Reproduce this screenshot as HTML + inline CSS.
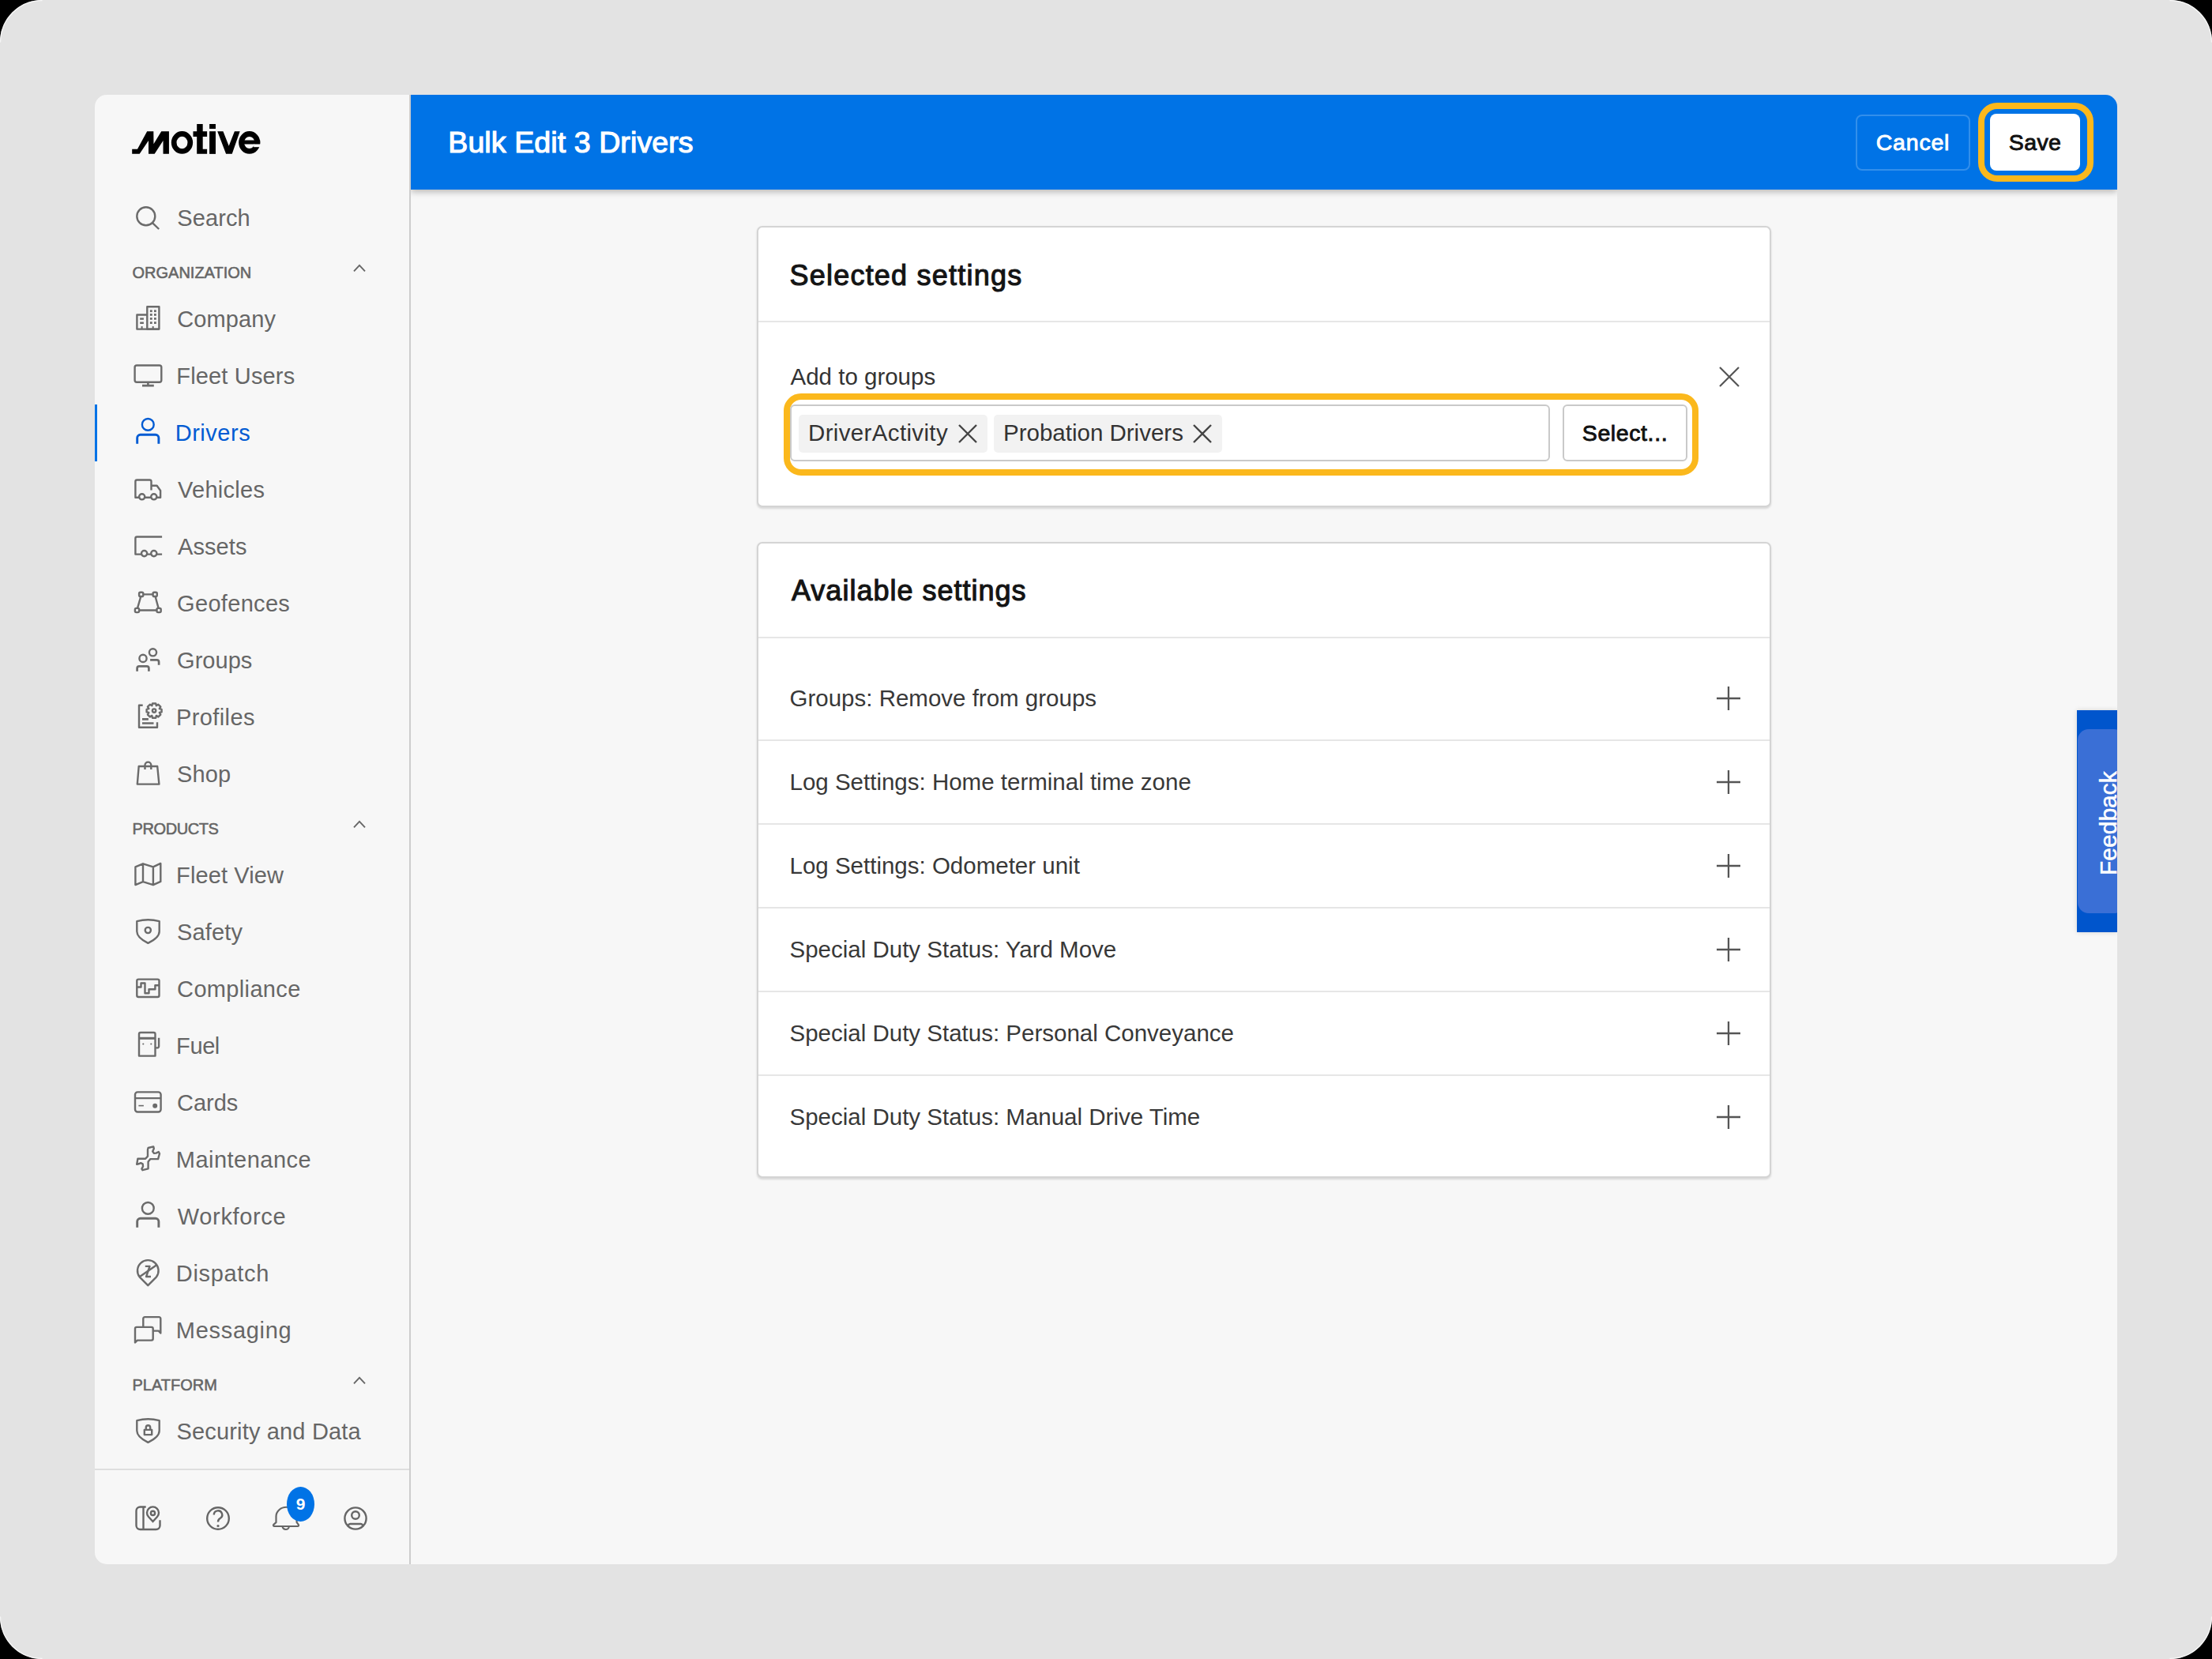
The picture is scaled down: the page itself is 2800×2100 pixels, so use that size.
<!DOCTYPE html>
<html><head><meta charset="utf-8">
<style>
*{box-sizing:border-box;margin:0;padding:0}
html,body{width:2800px;height:2100px;overflow:hidden;background:#000}
body{font-family:"Liberation Sans",sans-serif;position:relative}
.frame{position:absolute;left:0;top:0;width:2800px;height:2100px;background:#e3e3e3;border-radius:53px}
.win{position:absolute;left:120px;top:120px;width:2560px;height:1860px;background:#f7f7f7;border-radius:15px;overflow:hidden}
.a{position:absolute}
.side{position:absolute;left:0;top:0;width:400px;height:1860px;border-right:2px solid #cdcdcd}
.it{position:absolute;left:104.5px;font-size:29px;line-height:29px;color:#666;white-space:nowrap}
.ic{position:absolute;left:40px;width:52px;height:52px}
.ic{color:#6b6b6b}.ic *{fill:none;stroke:currentColor;stroke-width:2.4;stroke-linejoin:round}.ic .f,.ic .f *{fill:currentColor;stroke:none}
.sec{position:absolute;left:47.5px;font-size:20px;line-height:20px;font-weight:400;color:#666;-webkit-text-stroke:0.55px #666;white-space:nowrap}
.chev{position:absolute;left:323.4px;width:24px;height:16px}
.hdr{position:absolute;left:400px;top:0;width:2160px;height:120px;background:#0073e6;box-shadow:0 3px 8px rgba(0,0,0,0.26);clip-path:inset(0 0 -30px 0)}
.card{position:absolute;left:838px;width:1284px;background:#fff;border:2px solid #d4d4d4;border-radius:7px;box-shadow:0 1.5px 2.5px rgba(0,0,0,0.13)}
.row{position:absolute;left:0;width:1280px;height:104px}
.rt{position:absolute;left:39.5px;top:36.8px;font-size:29.5px;line-height:29.5px;color:#383838;white-space:nowrap}
.plus{position:absolute;left:1213px;top:37px;width:30px;height:30px}
.div{position:absolute;left:0;width:1280px;height:2px;background:#e6e6e6}
</style></head>
<body>
<div class="frame"></div>
<svg class="a" style="left:0;top:0" width="2800" height="2100" viewBox="0 0 2800 2100"><g fill="none" stroke="rgba(255,255,255,0.75)" stroke-width="1.3">
<path d="M0.5 53.5 A53 53 0 0 1 53.5 0.5"/><path d="M2746.5 0.5 A53 53 0 0 1 2799.5 53.5"/><path d="M2799.5 2046.5 A53 53 0 0 1 2746.5 2099.5"/><path d="M53.5 2099.5 A53 53 0 0 1 0.5 2046.5"/></g></svg>
<div class="win">
  <!-- SIDEBAR -->
  <div class="side">
    <svg class="a" style="left:30px;top:20px" width="200" height="80" viewBox="0 0 2212 885">
      <path d="M190 607 L190 540 L265 540 L400 290 L490 290 L492 468 L600 290 L707 290 L707 607 L625 607 L625 420 L505 607 L420 607 L420 420 L295 607 Z" fill="#000"/>
      <ellipse cx="890" cy="448" rx="114" ry="122" fill="none" stroke="#000" stroke-width="74"/>
      <path d="M1097 188 H1180 V290 H1240 V365 H1180 V540 H1240 V607 H1097 V365 H1045 V290 H1097 Z" fill="#000"/>
      <rect x="1273" y="188" width="87" height="67" fill="#000"/>
      <rect x="1273" y="290" width="87" height="317" fill="#000"/>
      <path d="M1385 290 H1465 L1545 495 L1625 290 H1700 L1590 607 H1505 Z" fill="#000"/>
      <ellipse cx="1833" cy="448" rx="112" ry="121" fill="none" stroke="#000" stroke-width="76"/>
      <rect x="1740" y="415" width="242" height="55" fill="#000"/>
      <rect x="1893" y="470" width="130" height="41" fill="#f7f7f7"/>
    </svg>
<svg class="ic" style="top:130px;color:#6b6b6b" viewBox="0 0 52 52"><circle cx="24.8" cy="23.7" r="11.5"/><path d="M33.2 32.3 L41.2 40"/></svg>
<div class="it" style="top:142px;left:104.3px;letter-spacing:0.1px;color:#666">Search</div>
<div class="sec" style="top:214.6px;">ORGANIZATION</div>
<svg class="chev" style="top:212px" viewBox="0 0 24 16"><path d="M5 11.3 L12 3.9 L19 11.3" fill="none" stroke="#666" stroke-width="1.9"/></svg>
<svg class="ic" style="top:258px;color:#6b6b6b" viewBox="0 0 52 52"><path d="M26.3 38.6 V10.3 H41.4 V38.6 Z"/><path d="M26.3 20.5 H13.4 V38.6 H41.4"/><g class="f"><rect x="29.9" y="14.3" width="2.8" height="2.8"/><rect x="35" y="14.3" width="2.8" height="2.8"/><rect x="29.9" y="19" width="2.8" height="2.8"/><rect x="35" y="19" width="2.8" height="2.8"/><rect x="29.9" y="24" width="2.8" height="2.8"/><rect x="35" y="24" width="2.8" height="2.8"/><rect x="29.9" y="29.2" width="2.8" height="2.8"/><rect x="35" y="29.2" width="2.8" height="2.8"/><rect x="17.2" y="24.3" width="4.7" height="2.5"/><rect x="17.2" y="29.5" width="4.7" height="2.5"/></g><path d="M19.6 35 V38.6 M33.7 35 V38.6" style="stroke-width:2"/></svg>
<div class="it" style="top:270px;left:104.3px;letter-spacing:0.1px;color:#666">Company</div>
<svg class="ic" style="top:330px;color:#6b6b6b" viewBox="0 0 52 52"><rect x="10.6" y="12.5" width="33.7" height="21.3" rx="2.5"/><path d="M27.4 34 V38 M20 38.1 H34.8" style="stroke-width:2.6"/></svg>
<div class="it" style="top:342px;left:103.3px;letter-spacing:0.16px;color:#666">Fleet Users</div>
<svg class="ic" style="top:402px;color:#005bd3" viewBox="0 0 52 52"><circle cx="27.3" cy="15.4" r="7.4"/><path d="M13.7 39.8 V32.3 A4 4 0 0 1 17.7 28.3 H36.9 A4 4 0 0 1 40.9 32.3 V39.8" style="stroke-width:2.9"/></svg>
<div class="it" style="top:414px;left:101.7px;letter-spacing:0.533px;color:#005bd3">Drivers</div>
<div class="a" style="left:0;top:392px;width:3px;height:72px;background:#0073e6"></div>
<svg class="ic" style="top:474px;color:#6b6b6b" viewBox="0 0 52 52"><path d="M16 35.7 H11.4 V15.5 A2 2 0 0 1 13.4 13.5 H29.5 A2 2 0 0 1 31.5 15.5 V26.6"/><path d="M31.5 20.8 H38.6 L43.1 27 V35.7 H38.6 M31 35.7 H23.4"/><circle cx="19.7" cy="34.8" r="3.6"/><circle cx="34.8" cy="34.8" r="3.6"/></svg>
<div class="it" style="top:486px;left:105.1px;letter-spacing:0.257px;color:#666">Vehicles</div>
<svg class="ic" style="top:546px;color:#6b6b6b" viewBox="0 0 52 52"><path d="M45.1 13.5 H13.4 A2 2 0 0 0 11.4 15.5 V35.6 H19 M26.2 35.6 H31.2 M38.4 35.6 H45.1"/><circle cx="22.6" cy="34.6" r="3.6"/><circle cx="34.8" cy="34.6" r="3.6"/></svg>
<div class="it" style="top:558px;left:105.1px;letter-spacing:0.06px;color:#666">Assets</div>
<svg class="ic" style="top:618px;color:#6b6b6b" viewBox="0 0 52 52"><path d="M21.3 14.4 H33.6 M18.3 17 L14 31.9 M36.6 17 L40.6 31.9 M16.1 34.5 H38.5"/><rect x="16.1" y="11.8" width="5.2" height="5.2" rx="1.6"/><rect x="33.6" y="11.8" width="5.2" height="5.2" rx="1.6"/><rect x="10.9" y="31.9" width="5.2" height="5.2" rx="1.6"/><rect x="38.5" y="31.9" width="5.2" height="5.2" rx="1.6"/></svg>
<div class="it" style="top:630px;left:104.1px;letter-spacing:0.313px;color:#666">Geofences</div>
<svg class="ic" style="top:690px;color:#6b6b6b" viewBox="0 0 52 52"><circle cx="21" cy="23.4" r="4.6"/><path d="M13.6 39.8 V36 A2.6 2.6 0 0 1 16.2 33.4 H25.8 A2.6 2.6 0 0 1 28.4 36 V39.8" style="stroke-width:2.7"/><circle cx="33.5" cy="15.8" r="4.6"/><path d="M30.1 25.4 H38.5 A2.6 2.6 0 0 1 41.1 28 V31.7" style="stroke-width:2.7"/></svg>
<div class="it" style="top:702px;left:104.1px;letter-spacing:0.02px;color:#666">Groups</div>
<svg class="ic" style="top:762px;color:#6b6b6b" viewBox="0 0 52 52"><path d="M20.7 10.7 H16 V38.7 H39 V32.3"/><path d="M20 28.4 H27.9 M20 33.5 H34.5" style="stroke-width:2.6"/><path d="M33 8.5 H37.2 L37.8 11.3 L40.4 9.8 L43.3 12.6 L41.8 15.2 L44.6 15.8 V19.4 L41.8 20 L43.3 22.6 L40.4 25.4 L37.8 23.9 L37.2 26.7 H33 L32.4 23.9 L29.8 25.4 L26.9 22.6 L28.4 20 L25.6 19.4 V15.8 L28.4 15.2 L26.9 12.6 L29.8 9.8 L32.4 11.3 Z"/><circle cx="35.1" cy="17.6" r="2.2"/></svg>
<div class="it" style="top:774px;left:103.1px;letter-spacing:0.371px;color:#666">Profiles</div>
<svg class="ic" style="top:834px;color:#6b6b6b" viewBox="0 0 52 52"><path d="M15.7 16 H39.2 L41.4 38.6 H13.8 Z"/><path d="M23.5 20 V14.5 A3.9 3.9 0 0 1 31.3 14.5 V20"/></svg>
<div class="it" style="top:846px;left:104.1px;letter-spacing:0.133px;color:#666">Shop</div>
<div class="sec" style="top:918.6px;letter-spacing:-0.4px;">PRODUCTS</div>
<svg class="chev" style="top:916px" viewBox="0 0 24 16"><path d="M5 11.3 L12 3.9 L19 11.3" fill="none" stroke="#666" stroke-width="1.9"/></svg>
<svg class="ic" style="top:962px;color:#6b6b6b" viewBox="0 0 52 52"><path d="M11.4 15.4 L21 11.3 L33.9 15.4 L43.3 10.9 V33.9 L33.9 38.2 L21 34.2 L11.4 38.1 Z M21 11.3 V34.2 M33.9 15.4 V38.2"/></svg>
<div class="it" style="top:974px;left:103.1px;letter-spacing:0.111px;color:#666">Fleet View</div>
<svg class="ic" style="top:1034px;color:#6b6b6b" viewBox="0 0 52 52"><path d="M13.3 12.1 Q27.4 8.5 41.7 12.1 V25 Q41.7 33 27.4 39.8 Q13.3 33 13.3 25 Z"/><circle cx="27.3" cy="23.5" r="3.6"/></svg>
<div class="it" style="top:1046px;left:104.1px;letter-spacing:0.14px;color:#666">Safety</div>
<svg class="ic" style="top:1106px;color:#6b6b6b" viewBox="0 0 52 52"><rect x="13.3" y="13.6" width="28.2" height="22.4" rx="2"/><path d="M13.3 23.5 H18.5 V18.5 H23.5 V31.3 H28.5 V26.2 H36.4 V21.3 H41.5"/></svg>
<div class="it" style="top:1118px;left:104.1px;letter-spacing:0.344px;color:#666">Compliance</div>
<svg class="ic" style="top:1178px;color:#6b6b6b" viewBox="0 0 52 52"><path d="M16 38.6 V11 A2 2 0 0 1 18 9 H34.5 A2 2 0 0 1 36.5 11 V38.6 Z"/><path d="M16 16.3 H36.5" style="stroke-width:3"/><path d="M36.5 28.4 H39 A2 2 0 0 0 41.1 26.4 V15.7"/><circle class="f" cx="21.3" cy="23.5" r="1.1"/><circle class="f" cx="31.3" cy="23.5" r="1.1"/></svg>
<div class="it" style="top:1190px;left:103.1px;letter-spacing:-0.4px;color:#666">Fuel</div>
<svg class="ic" style="top:1250px;color:#6b6b6b" viewBox="0 0 52 52"><rect x="11" y="12.4" width="32.6" height="25.1" rx="3.2"/><path d="M11 20.1 H43.6"/><path d="M15.4 29.6 H21.9" style="stroke-width:1.6"/><circle class="f" cx="36.2" cy="29.8" r="3"/></svg>
<div class="it" style="top:1262px;left:104.1px;letter-spacing:-0.025px;color:#666">Cards</div>
<svg class="ic" style="top:1322px;color:#6b6b6b" viewBox="0 0 52 52"><path d="M13.2 31.7 L14.4 24.8 H24.1 L27 21.6 V13.2 L27.6 11 L34.2 9.4 L34.8 11.9 L33.2 15.4 L35.1 17.9 L37.6 17.6 L40.8 16 L42 18.2 L40.1 25.1 H30.4 L27.6 28.5 V37.3 L20.4 39.2 L19.4 37.6 L21 34.5 L20.7 31.3 L18.2 30.1 L15.4 31.3 Z"/></svg>
<div class="it" style="top:1334px;left:102.8px;letter-spacing:0.48px;color:#666">Maintenance</div>
<svg class="ic" style="top:1394px;color:#6b6b6b" viewBox="0 0 52 52"><circle cx="27.3" cy="15.4" r="7.4"/><path d="M13.7 39.8 V32.3 A4 4 0 0 1 17.7 28.3 H36.9 A4 4 0 0 1 40.9 32.3 V39.8" style="stroke-width:2.9"/></svg>
<div class="it" style="top:1406px;left:104.8px;letter-spacing:0.65px;color:#666">Workforce</div>
<svg class="ic" style="top:1466px;color:#6b6b6b" viewBox="0 0 52 52"><path d="M27.3 41.2 L16.6 30.3 A13.3 13.3 0 1 1 38 30.3 Z"/><path d="M16.6 30.3 L38.3 15.2"/><path d="M23.8 16.9 H29.5 L25.1 30 H31"/></svg>
<div class="it" style="top:1478px;left:102.8px;letter-spacing:0.671px;color:#666">Dispatch</div>
<svg class="ic" style="top:1538px;color:#6b6b6b" viewBox="0 0 52 52"><path d="M21.3 21.9 V11.2 A2 2 0 0 1 23.3 9.1 H41.3 A2 2 0 0 1 43.3 11.2 V29.5 L40.8 26.6 H33.7"/><path d="M11 41.4 V23.9 A2 2 0 0 1 13 21.9 H31.7 A2 2 0 0 1 33.7 23.9 V36.6 A2 2 0 0 1 31.7 38.6 H13.8 Z"/></svg>
<div class="it" style="top:1550px;left:102.8px;letter-spacing:0.7px;color:#666">Messaging</div>
<div class="sec" style="top:1622.6px;">PLATFORM</div>
<svg class="chev" style="top:1620px" viewBox="0 0 24 16"><path d="M5 11.3 L12 3.9 L19 11.3" fill="none" stroke="#666" stroke-width="1.9"/></svg>
<svg class="ic" style="top:1666px;color:#6b6b6b" viewBox="0 0 52 52"><path d="M13.3 12.1 Q27.4 8.5 41.7 12.1 V25 Q41.7 33 27.4 39.8 Q13.3 33 13.3 25 Z"/><rect x="22.8" y="23.9" width="9.4" height="6.2"/><path d="M24.8 23.9 V21 A2.7 2.7 0 0 1 30.2 21 V23.9"/></svg>
<div class="it" style="top:1678px;left:103.5px;letter-spacing:0.163px;color:#666">Security and Data</div>
<div class="a" style="left:0;top:1739px;width:398px;height:2px;background:#dedede"></div>
<svg class="a" style="left:40px;top:1770px" width="52" height="60" viewBox="0 0 52 60"><g fill="none" stroke="#666" stroke-width="2.4"><path d="M24.7 17.5 H17.5 A5 5 0 0 0 12.5 22.5 V41 A5 5 0 0 0 17.5 46 H37.5 A5 5 0 0 0 42.5 41 V34.3"/><path d="M21.5 17.5 V46"/><path d="M33.5 36 L28 30 A7.5 7.5 0 1 1 39 30 Z"/><circle cx="33.5" cy="25.4" r="2.6"/></g></svg>
<svg class="a" style="left:125.5px;top:1771.5px" width="60" height="60" viewBox="0 0 60 60"><g fill="none" stroke="#666" stroke-width="2.4"><circle cx="30" cy="30" r="13.8"/><path d="M24.8 25.5 A5.2 5.2 0 1 1 32.5 30 Q30 31.5 30 34.5"/></g><circle cx="30" cy="39.5" r="1.6" fill="#666"/></svg>
<svg class="a" style="left:215px;top:1770px" width="60" height="60" viewBox="0 0 60 60"><g fill="none" stroke="#666" stroke-width="2.2"><path d="M14.5 37 V29.5 A13 11.7 0 0 1 40.6 29.5 V37 L42.9 40.1 A1.2 1.2 0 0 1 41.9 42 H12.2 A1.2 1.2 0 0 1 11.2 40.1 Z"/><path d="M22.6 42.3 A4.1 3.7 0 0 0 30.8 42.3"/></g></svg>
<div class="a" style="left:242.9px;top:1762.2px;width:35px;height:43.4px;border-radius:50%;background:#0073e6"></div>
<div class="a" style="left:243.2px;top:1773.3px;width:35px;text-align:center;font-size:21px;line-height:21px;font-weight:700;color:#fff">9</div>
<svg class="a" style="left:299.7px;top:1771.5px" width="60" height="60" viewBox="0 0 60 60"><g fill="none" stroke="#666" stroke-width="2.4"><circle cx="30" cy="30" r="13.6"/><circle cx="30" cy="26" r="4.8"/><path d="M21 40.5 A2.5 2.5 0 0 1 23.5 37 H36.5 A2.5 2.5 0 0 1 39 40.5"/></g></svg>
  </div>
  <!-- HEADER -->
  <div class="hdr">
    <div class="a" style="left:47.3px;top:42.4px;font-size:37.5px;line-height:37.5px;font-weight:400;color:#fff;-webkit-text-stroke:1.2px #fff;letter-spacing:0.1px;white-space:nowrap">Bulk Edit 3 Drivers</div>
    <div class="a" style="left:1829px;top:25px;width:145px;height:71px;border:2px solid rgba(255,255,255,0.2);border-radius:8px"></div>
    <div class="a" style="left:1829px;top:46px;width:145px;text-align:center;font-size:28.5px;line-height:28.5px;font-weight:400;color:#fff;-webkit-text-stroke:0.9px #fff;letter-spacing:0.8px">Cancel</div>
    <div class="a" style="left:1984px;top:10px;width:146px;height:100px;border:8px solid #fbb81c;border-radius:24px"></div>
    <div class="a" style="left:1999px;top:24px;width:114px;height:72px;background:#fff;border-radius:8px"></div>
    <div class="a" style="left:1999px;top:46px;width:114px;text-align:center;font-size:28.5px;line-height:28.5px;font-weight:400;color:#111;-webkit-text-stroke:0.9px #111;letter-spacing:0.4px">Save</div>
  </div>
<div class="card" style="top:166px;height:356px">
<div class="a" style="left:39.5px;top:42.5px;font-size:36px;line-height:36px;font-weight:400;color:#141414;-webkit-text-stroke:1.1px #141414;letter-spacing:1.22px;white-space:nowrap">Selected settings</div>
<div class="div" style="top:118px"></div>
<div class="a" style="left:40.5px;top:173.5px;font-size:29.5px;line-height:29.5px;color:#333;white-space:nowrap">Add to groups</div>
<svg class="a" style="left:1216px;top:176px" width="26" height="26" viewBox="0 0 26 26"><path d="M1 1 L25 25 M25 1 L1 25" stroke="#555" stroke-width="2.2"/></svg>
<div class="a" style="left:32px;top:210px;width:1158px;height:104px;border:8px solid #fbb81c;border-radius:22px"></div>
<div class="a" style="left:40px;top:224px;width:961.5px;height:72px;border:2px solid #c9c9c9;border-radius:6px;background:#fff"></div>
<div class="a" style="left:51px;top:237px;width:238.5px;height:48px;background:#f2f2f2;border-radius:5px"></div>
<div class="a" style="left:63px;top:245px;font-size:29.5px;line-height:29.5px;color:#333;letter-spacing:0.35px;white-space:nowrap">DriverActivity</div>
<svg class="a" style="left:252.5px;top:248.5px" width="24" height="24" viewBox="0 0 24 24"><path d="M1 1 L23 23 M23 1 L1 23" stroke="#444" stroke-width="2.4"/></svg>
<div class="a" style="left:297.5px;top:237px;width:289.5px;height:48px;background:#f2f2f2;border-radius:5px"></div>
<div class="a" style="left:310px;top:245px;font-size:29.5px;line-height:29.5px;color:#333;white-space:nowrap">Probation Drivers</div>
<svg class="a" style="left:550px;top:248.5px" width="24" height="24" viewBox="0 0 24 24"><path d="M1 1 L23 23 M23 1 L1 23" stroke="#444" stroke-width="2.4"/></svg>
<div class="a" style="left:1018px;top:224px;width:158px;height:72px;border:2px solid #c9c9c9;border-radius:6px;background:#fff"></div>
<div class="a" style="left:1018px;top:246px;width:158px;text-align:center;font-size:28.5px;line-height:28.5px;font-weight:400;color:#111;-webkit-text-stroke:0.9px #111;letter-spacing:0.6px;white-space:nowrap">Select...</div>
</div>
<div class="card" style="top:566px;height:805px">
<div class="a" style="left:42px;top:41.5px;font-size:36px;line-height:36px;font-weight:400;color:#141414;-webkit-text-stroke:1.1px #141414;letter-spacing:1px;white-space:nowrap">Available settings</div>
<div class="div" style="top:118px"></div>
<div class="row" style="top:144px"><div class="rt">Groups: Remove from groups</div><svg class="plus" viewBox="0 0 30 30"><path d="M15 0 V30 M0 15 H30" stroke="#555" stroke-width="2.3"/></svg></div>
<div class="div" style="top:248px"></div>
<div class="row" style="top:250px"><div class="rt">Log Settings: Home terminal time zone</div><svg class="plus" viewBox="0 0 30 30"><path d="M15 0 V30 M0 15 H30" stroke="#555" stroke-width="2.3"/></svg></div>
<div class="div" style="top:354px"></div>
<div class="row" style="top:356px"><div class="rt">Log Settings: Odometer unit</div><svg class="plus" viewBox="0 0 30 30"><path d="M15 0 V30 M0 15 H30" stroke="#555" stroke-width="2.3"/></svg></div>
<div class="div" style="top:460px"></div>
<div class="row" style="top:462px"><div class="rt">Special Duty Status: Yard Move</div><svg class="plus" viewBox="0 0 30 30"><path d="M15 0 V30 M0 15 H30" stroke="#555" stroke-width="2.3"/></svg></div>
<div class="div" style="top:566px"></div>
<div class="row" style="top:568px"><div class="rt">Special Duty Status: Personal Conveyance</div><svg class="plus" viewBox="0 0 30 30"><path d="M15 0 V30 M0 15 H30" stroke="#555" stroke-width="2.3"/></svg></div>
<div class="div" style="top:672px"></div>
<div class="row" style="top:674px"><div class="rt">Special Duty Status: Manual Drive Time</div><svg class="plus" viewBox="0 0 30 30"><path d="M15 0 V30 M0 15 H30" stroke="#555" stroke-width="2.3"/></svg></div>
</div>
<div class="a" style="left:2509px;top:779px;width:51px;height:281px;background:#0055cc;box-shadow:0 0 6px rgba(0,0,0,0.15)"></div><div class="a" style="left:2510px;top:803px;width:60px;height:233px;background:#3a6fd6;border-radius:14px"></div><div class="a" style="left:2534px;top:988px;transform-origin:0 0;transform:rotate(-90deg);font-size:30px;line-height:30px;color:#fff;-webkit-text-stroke:0.5px #fff;white-space:nowrap">Feedback</div>
</div>
</body></html>
